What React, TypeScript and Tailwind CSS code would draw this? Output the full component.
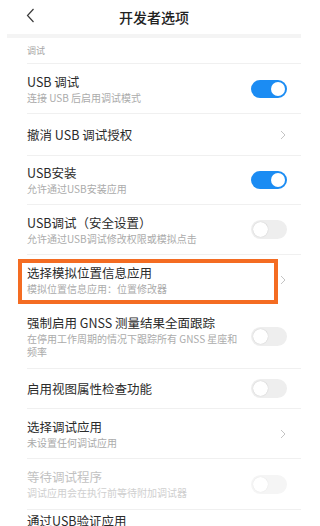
import type { ReactNode } from 'react';

type Row = {
  title: string;
  sub?: string;
  kind: 'on' | 'off' | 'arrow' | 'none';
  h: string;
  disabled?: boolean;
  highlight?: boolean;
};

const rows: Row[] = [
  { title: 'USB 调试', sub: '连接 USB 后启用调试模式', kind: 'on', h: 'h-[49px]' },
  { title: '撤消 USB 调试授权', kind: 'arrow', h: 'h-[41px]' },
  { title: 'USB安装', sub: '允许通过USB安装应用', kind: 'on', h: 'h-[48px]' },
  { title: 'USB调试（安全设置）', sub: '允许通过USB调试修改权限或模拟点击', kind: 'off', h: 'h-[49px]' },
  { title: '选择模拟位置信息应用', sub: '模拟位置信息应用：位置修改器', kind: 'arrow', h: 'h-[50px]', highlight: true },
  { title: '强制启用 GNSS 测量结果全面跟踪', sub: '在停用工作周期的情况下跟踪所有 GNSS 星座和频率', kind: 'off', h: 'h-[63px]' },
  { title: '启用视图属性检查功能', kind: 'off', h: 'h-[39px]' },
  { title: '选择调试应用', sub: '未设置任何调试应用', kind: 'arrow', h: 'h-[49px]' },
  { title: '等待调试程序', sub: '调试应用会在执行前等待附加调试器', kind: 'off', h: 'h-[50px]', disabled: true },
];

function Toggle({ on, disabled }: { on: boolean; disabled?: boolean }) {
  if (on) {
    return (
      <div className="w-[36px] h-[18px] rounded-full bg-[#1b8cf3] flex items-center justify-end pr-[2px]">
        <div className="w-[14px] h-[14px] rounded-full bg-white" />
      </div>
    );
  }
  return (
    <div className={`w-[36px] h-[19px] rounded-full flex items-center pl-[2px] ${disabled ? 'bg-[#f5f5f5]' : 'bg-[#eeeeee]'}`}>
      <div className={`w-[15px] h-[15px] rounded-full bg-white ${disabled ? 'shadow-[0_0_1px_rgba(0,0,0,0.12)]' : 'shadow-[0_0_1px_rgba(0,0,0,0.25)]'}`} />
    </div>
  );
}

function Chevron() {
  return (
    <svg width="6" height="10" viewBox="0 0 6 10" className="mr-[1px]">
      <path d="M1 1 L5 5 L1 9" fill="none" stroke="#c4c4c4" strokeWidth="1" />
    </svg>
  );
}

function Divider() {
  return <div className="ml-[27px] mr-[7px] h-px bg-[#f0f0f0]" />;
}

function Item({ row, children }: { row: Row; children?: ReactNode }) {
  return (
    <div className={`relative ${row.h} flex items-center pl-[27px] pr-[21px]`}>
      <div className="flex-1 min-w-0">
        <div className={`text-[12.5px] leading-[16px] ${row.disabled ? 'text-[#c2c2c2]' : 'text-[#2b2b2b]'}`}>{row.title}</div>
        {row.sub && (
          <div className={`w-[214px] text-[10px] leading-[13px] mt-[1px] ${row.disabled ? 'text-[#cfcfcf]' : 'text-[#ababab]'}`}>
            {row.sub}
          </div>
        )}
      </div>
      {row.kind === 'on' && <Toggle on />}
      {row.kind === 'off' && <Toggle on={false} disabled={row.disabled} />}
      {row.kind === 'arrow' && <Chevron />}
      {children}
    </div>
  );
}

export default function App() {
  return (
    <div className="w-[320px] h-[526px] overflow-hidden bg-white" style={{ fontFamily: '"Noto Sans CJK SC", "Noto Sans", sans-serif' }}>
      <div className="w-[308px]">
        <div className="relative h-[34px] flex items-center justify-center">
          <svg width="9" height="15" viewBox="0 0 9 15" className="absolute left-[26px] top-[8px]">
            <path d="M7.5 1 L1.5 7.5 L7.5 14" fill="none" stroke="#3a3a3a" strokeWidth="1.2" />
          </svg>
          <span className="text-[14px] font-medium text-[#222] pt-[1px]">开发者选项</span>
        </div>
        <div className="mx-[7px] h-[4px] bg-[#f4f4f4]" />
        <div className="h-[25px] flex items-center pl-[27px] pt-[1px] text-[9px] text-[#a5a5a5]">调试</div>
        <Divider />
        {rows.map((row) => (
          <div key={row.title}>
            <Item row={row}>
              {row.highlight && (
                <div className="absolute left-[18px] top-[4px] w-[260px] h-[45px] border-[4px] border-[#f46c22]" />
              )}
            </Item>
            {!row.highlight && <Divider />}
          </div>
        ))}
        {/* last row, cut off by the bottom edge */}
        <div className="flex items-start pl-[27px] pr-[21px] pt-[3px]">
          <div className="flex-1 text-[12.5px] leading-[16px] text-[#2b2b2b]">通过USB验证应用</div>
          <div className="mt-[18px]">
            <Toggle on={false} />
          </div>
        </div>
      </div>
    </div>
  );
}
